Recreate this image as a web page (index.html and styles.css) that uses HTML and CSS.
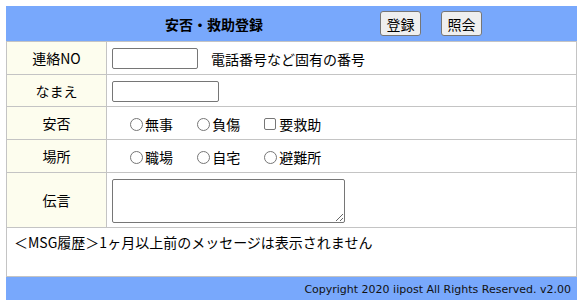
FILE: index.html
```html
<!DOCTYPE html>
<html lang="ja">
<head>
<meta charset="utf-8">
<title>安否・救助登録</title>
<link rel="stylesheet" href="styles.css">
</head>
<body>
<div class="page">
  <div class="header">
    <div class="title">安否・救助登録</div>
    <button class="btn btn-first" type="button">登録</button>
    <button class="btn" type="button">照会</button>
  </div>
  <table class="form">
    <tr class="r1">
      <th>連絡NO</th>
      <td><input class="txt txt-no" type="text"><span class="hint">電話番号など固有の番号</span></td>
    </tr>
    <tr class="r2">
      <th>なまえ</th>
      <td><input class="txt txt-name" type="text"></td>
    </tr>
    <tr class="r3">
      <th>安否</th>
      <td class="opts">
        <label class="opt"><span class="radio"></span>無事</label>
        <label class="opt"><span class="radio"></span>負傷</label>
        <label class="opt"><span class="check"></span>要救助</label>
      </td>
    </tr>
    <tr class="r4">
      <th>場所</th>
      <td class="opts">
        <label class="opt"><span class="radio"></span>職場</label>
        <label class="opt"><span class="radio"></span>自宅</label>
        <label class="opt"><span class="radio"></span>避難所</label>
      </td>
    </tr>
    <tr class="r5">
      <th>伝言</th>
      <td><textarea class="msg"></textarea></td>
    </tr>
  </table>
  <div class="history">＜MSG履歴＞1ヶ月以上前のメッセージは表示されません</div>
  <div class="footer">Copyright 2020 iipost All Rights Reserved. v2.00</div>
</div>
</body>
</html>
```
FILE: styles.css
```css
html, body {
  margin: 0;
  padding: 0;
  background: #fff;
}
body {
  font-family: "Noto Sans CJK JP", "Noto Sans", sans-serif;
  font-size: 14px;
  color: #000;
}
.page {
  width: 571px;
  margin: 6px 0 0 6px;
}
.header {
  height: 35px;
  background: #78a8fc;
  display: flex;
  align-items: center;
}
.title {
  font-weight: bold;
  font-size: 14px;
  line-height: 20px;
  margin-left: 159px;
  width: 105px;
  white-space: nowrap;
}
.btn {
  font-family: "Noto Sans CJK JP", sans-serif;
  font-size: 14px;
  height: 25px;
  width: 41px;
  padding: 0;
  line-height: 22px;
  background: #efefef;
  border: 1px solid #767676;
  border-radius: 3px;
  color: #000;
  margin-left: 20px;
}
.btn-first {
  margin-left: 110px;
}
.form {
  width: 571px;
  border-collapse: collapse;
}
.form th, .form td {
  border: 1px solid #c4c4c4;
  padding: 0 5px;
  line-height: 20px;
}
.form th {
  width: 89px;
  background: #fdfdee;
  font-weight: normal;
  text-align: center;
}
.form td {
  text-align: left;
}
.r1 th, .r1 td { height: 32px; }
.r2 th, .r2 td { height: 31px; }
.r3 th, .r3 td { height: 32px; }
.r4 th, .r4 td { height: 32px; }
.r5 th, .r5 td { height: 54px; }
.txt {
  box-sizing: border-box;
  height: 21px;
  border: 1px solid #767676;
  border-radius: 2px;
  padding: 1px 2px;
  vertical-align: middle;
  margin: 0;
}
.txt-no { width: 86px; }
.txt-name { width: 107px; }
.hint {
  margin-left: 13px;
  vertical-align: middle;
}
.opts {
  padding-left: 23px !important;
}
.opt {
  display: inline-flex;
  align-items: center;
  margin-right: 21px;
  vertical-align: middle;
}
.radio {
  box-sizing: border-box;
  width: 13px;
  height: 13px;
  border: 1px solid #767676;
  border-radius: 50%;
  margin-right: 2px;
  background: #fff;
}
.check {
  box-sizing: border-box;
  width: 12px;
  height: 12px;
  border: 1px solid #767676;
  border-radius: 2px;
  margin-right: 3px;
  background: #fff;
}
.msg {
  box-sizing: border-box;
  width: 233px;
  height: 44px;
  border: 1px solid #767676;
  border-radius: 2px;
  margin: 1px 0 0;
  display: block;
  resize: both;
}
.history {
  border: 1px solid #c4c4c4;
  border-top: none;
  padding: 4px 0 0 7px;
  box-sizing: border-box;
  height: 49px;
  line-height: 20px;
}
.footer {
  height: 23px;
  background: #78a8fc;
  text-align: right;
  font-family: "DejaVu Sans", sans-serif;
  font-size: 11px;
  line-height: 25px;
  padding-right: 6px;
  color: #111;
}
```
